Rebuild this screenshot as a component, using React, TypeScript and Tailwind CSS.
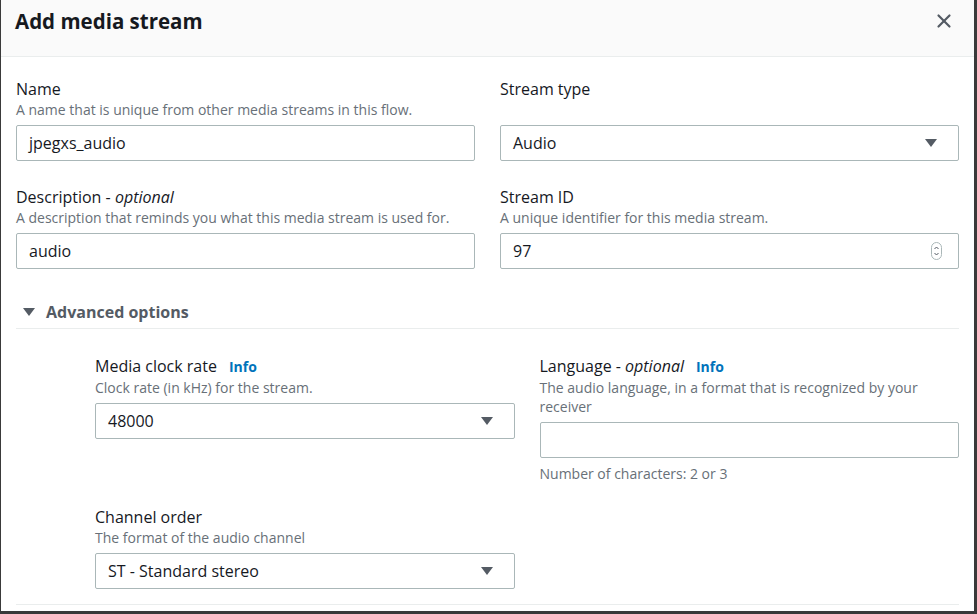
import { X } from "lucide-react";

function Caret() {
  return (
    <svg width="14" height="10" viewBox="0 0 14 10" className="shrink-0">
      <path d="M1 1h12L7 9z" fill="#545b64" />
    </svg>
  );
}

function Label({ text, optional, info }: { text: string; optional?: boolean; info?: boolean }) {
  return (
    <div className="text-[16px] leading-[22px] text-[#16191f]">
      {text}
      {optional && (
        <>
          {" - "}
          <i>optional</i>
        </>
      )}
      {info && <span className="ml-3 text-[14px] font-bold text-[#0073bb]">Info</span>}
    </div>
  );
}

function Hint({ children }: { children: React.ReactNode }) {
  return <div className="text-[14px] leading-[19px] text-[#687078]">{children}</div>;
}

function Spinner() {
  return (
    <svg width="11" height="18" viewBox="0 0 11 18" className="mr-[-4px]">
      <rect x="0.5" y="0.5" width="10" height="17" rx="5" fill="white" stroke="#aab7b8" />
      <path d="M3.5 7l2-2 2 2M3.5 11l2 2 2-2" fill="none" stroke="#545b64" strokeWidth="1" />
    </svg>
  );
}

function Box({ value, kind }: { value?: string; kind?: "select" | "number" }) {
  return (
    <div className="mt-[6px] flex h-[36px] items-center justify-between rounded-[2px] border border-[#aab7b8] bg-white pl-[12px] pr-[20px] text-[16px] text-[#16191f]">
      <span>{value}</span>
      {kind === "select" && <Caret />}
      {kind === "number" && <Spinner />}
    </div>
  );
}

export default function App() {
  return (
    <div
      className="h-[614px] w-[977px] overflow-hidden border-l border-r-[3px] border-b-[3px] border-[#3a3a3a] bg-white"
      style={{ fontFamily: '"Open Sans", "Noto Sans", sans-serif' }}
    >
      <div className="flex h-[57px] items-center justify-between border-b border-[#eaeded] bg-[#fafafa] pl-[14px] pr-[19px]">
        <h1 className="mt-[-13px] text-[20.5px] font-bold text-[#16191f]">Add media stream</h1>
        <X size={22} strokeWidth={2.4} className="mt-[-15px] text-[#545b64]" />
      </div>

      <div className="px-[15px] pt-[21px]">
        <div className="grid grid-cols-2 gap-x-[25px] gap-y-[25px]">
          <div>
            <Label text="Name" />
            <Hint>A name that is unique from other media streams in this flow.</Hint>
            <Box value="jpegxs_audio" />
          </div>
          <div>
            <Label text="Stream type" />
            <div className="h-[19px]" />
            <Box value="Audio" kind="select" />
          </div>
          <div>
            <Label text="Description" optional />
            <Hint>A description that reminds you what this media stream is used for.</Hint>
            <Box value="audio" />
          </div>
          <div>
            <Label text="Stream ID" />
            <Hint>A unique identifier for this media stream.</Hint>
            <Box value="97" kind="number" />
          </div>
        </div>

        <div className="mt-[31px] flex items-center gap-[10px] border-b border-[#eaeded] pb-[4px] pl-[6px]">
          <Caret />
          <span className="text-[16px] font-bold text-[#545b64]">Advanced options</span>
        </div>

        <div className="grid grid-cols-2 gap-x-[25px] pb-[15px] pl-[79px] pt-[26px]">
          <div>
            <Label text="Media clock rate" info />
            <Hint>Clock rate (in kHz) for the stream.</Hint>
            <Box value="48000" kind="select" />
          </div>
          <div>
            <Label text="Language" optional info />
            <Hint>The audio language, in a format that is recognized by your receiver</Hint>
            <Box />
            <div className="mt-[6px] text-[14px] leading-[19px] text-[#687078]">Number of characters: 2 or 3</div>
          </div>
          <div className="mt-[23px]">
            <Label text="Channel order" />
            <Hint>The format of the audio channel</Hint>
            <Box value="ST - Standard stereo" kind="select" />
          </div>
        </div>
        <div className="border-b border-[#eaeded]" />
      </div>
    </div>
  );
}
